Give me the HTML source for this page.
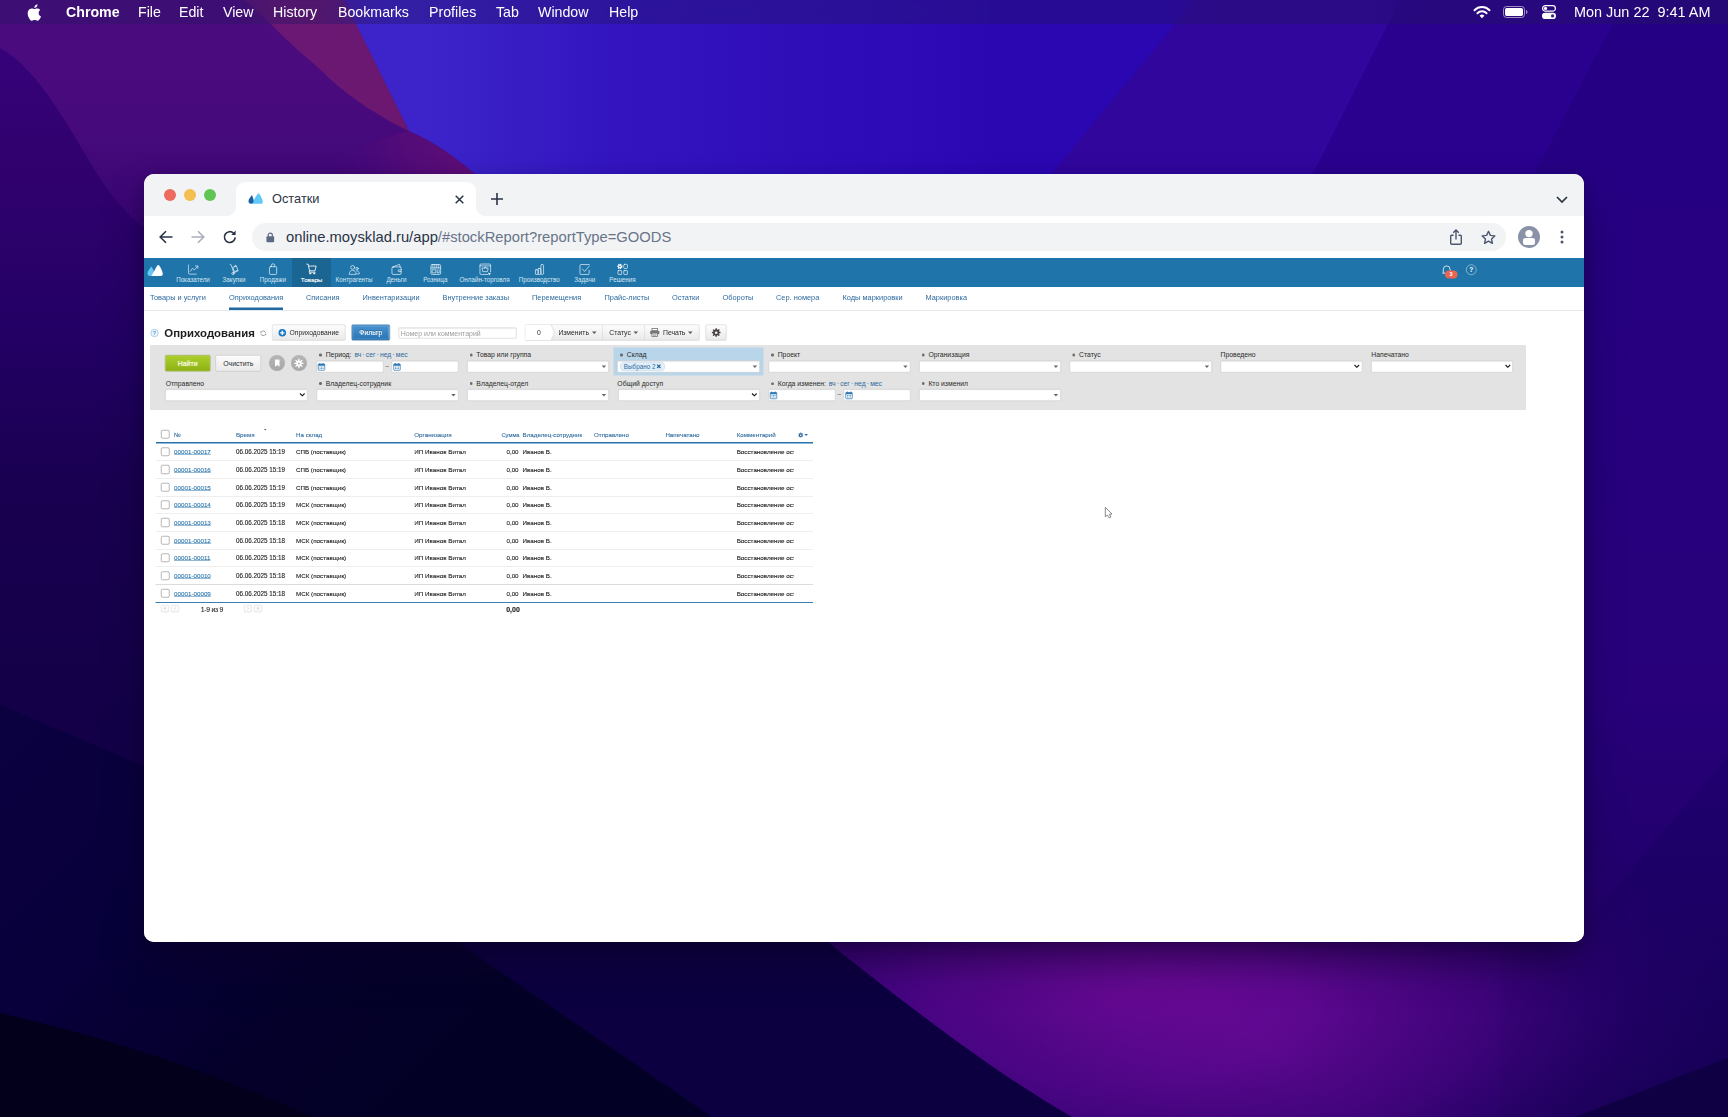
<!DOCTYPE html>
<html lang="ru">
<head>
<meta charset="utf-8">
<title>Остатки</title>
<style>
*{box-sizing:border-box}
html,body{margin:0;padding:0}
body{width:1728px;height:1117px;overflow:hidden;position:relative;background:#24007c;font-family:"Liberation Sans",sans-serif;-webkit-font-smoothing:antialiased}
#wall{position:absolute;left:0;top:0;width:1728px;height:1117px;display:block}
/* ---------- macOS menu bar ---------- */
#menubar{position:absolute;left:0;top:0;width:1728px;height:24px;background:rgba(36,22,96,.36);-webkit-backdrop-filter:blur(18px);backdrop-filter:blur(18px);color:#fff;font-size:14.2px;line-height:24px;white-space:nowrap}
#menubar span{position:absolute;top:0;height:24px}
#menubar .b{font-weight:700}
#menubar svg{position:absolute}
/* ---------- chrome window ---------- */
#win{position:absolute;left:144px;top:174px;width:1440px;height:768px;border-radius:10px;background:#fff;overflow:hidden;box-shadow:0 24px 42px -6px rgba(12,0,40,.6),0 3px 12px rgba(12,0,40,.25)}
#titlebar{position:absolute;left:0;top:0;width:1440px;height:42px;background:#f1f3f5}
.tl{position:absolute;top:15px;width:12px;height:12px;border-radius:50%}
#tab{position:absolute;left:92px;top:8px;width:240px;height:34px;background:#fff;border-radius:9px 9px 0 0}
#tab:before,#tab:after{content:"";position:absolute;bottom:0;width:9px;height:9px}
#tab:before{left:-9px;background:radial-gradient(circle at 0 0,rgba(255,255,255,0) 8.5px,#fff 9px)}
#tab:after{right:-9px;background:radial-gradient(circle at 100% 0,rgba(255,255,255,0) 8.5px,#fff 9px)}
#tabtitle{position:absolute;left:36px;top:0;height:34px;line-height:33px;font-size:12.8px;color:#2b3445}
#toolbar{position:absolute;left:0;top:42px;width:1440px;height:42px;background:#fff}
#omni{position:absolute;left:108px;top:7px;width:1254px;height:28px;border-radius:14px;background:#f1f3f5}
#url{position:absolute;left:34px;top:0;height:28px;line-height:29px;font-size:14.77px;color:#2b3445;white-space:nowrap}
#url i{font-style:normal;color:#6a7488}
#win svg{position:absolute;overflow:visible}
/* ---------- app ---------- */
#view{position:absolute;left:0;top:84px;width:1440px;height:684px;overflow:hidden;background:#fff}
#app{position:absolute;left:0;top:0;width:2880px;height:1368px;transform:scale(.5);transform-origin:0 0;font-size:13.6px;color:#222}
#app div,#app span,#app a,#app svg{position:absolute;white-space:nowrap}
</style>
</head>
<body>
<!--WALL-->
<svg id="wall" width="1728" height="1117" viewBox="0 0 1728 1117" preserveAspectRatio="none">
<defs>
<linearGradient id="gBase" x1="0" y1="0" x2="0" y2="1">
<stop offset="0" stop-color="#2c08b2"/><stop offset=".16" stop-color="#2b07a8"/><stop offset=".5" stop-color="#270090"/><stop offset=".85" stop-color="#210070"/><stop offset="1" stop-color="#1a005c"/>
</linearGradient>
<linearGradient id="gBlue" x1="420" y1="0" x2="1000" y2="0" gradientUnits="userSpaceOnUse">
<stop offset="0" stop-color="#3c24ca"/><stop offset=".35" stop-color="#3314be"/><stop offset="1" stop-color="#2b07b2"/>
</linearGradient>
<linearGradient id="gR" x1="0" y1="0" x2="0" y2="1117" gradientUnits="userSpaceOnUse">
<stop offset="0" stop-color="#240084"/><stop offset=".16" stop-color="#260082"/><stop offset=".62" stop-color="#27007a"/><stop offset=".82" stop-color="#21006a"/><stop offset="1" stop-color="#1a005a"/>
</linearGradient>
<linearGradient id="gR2" x1="0" y1="750" x2="0" y2="1117" gradientUnits="userSpaceOnUse">
<stop offset="0" stop-color="#200070"/><stop offset="1" stop-color="#160054"/>
</linearGradient>
<linearGradient id="gL2" x1="0" y1="0" x2="0" y2="1">
<stop offset="0" stop-color="#4c0c80"/><stop offset=".16" stop-color="#470a7c"/><stop offset=".4" stop-color="#2a0068"/><stop offset=".6" stop-color="#1b0054"/><stop offset="1" stop-color="#14004a"/>
</linearGradient>
<linearGradient id="gL1" x1="0" y1="0" x2="0" y2="1">
<stop offset="0" stop-color="#36027a"/><stop offset=".16" stop-color="#31016e"/><stop offset=".4" stop-color="#220064"/><stop offset=".6" stop-color="#190050"/><stop offset="1" stop-color="#120046"/>
</linearGradient>
<linearGradient id="gMag" x1="300" y1="20" x2="470" y2="175" gradientUnits="userSpaceOnUse">
<stop offset="0" stop-color="#6a1874"/><stop offset=".6" stop-color="#6c1870"/><stop offset="1" stop-color="#5a0e76"/>
</linearGradient>
<radialGradient id="gGlow" cx="1110" cy="1000" r="620" gradientUnits="userSpaceOnUse" gradientTransform="translate(1110 1000) scale(1 .45) translate(-1110 -1000)">
<stop offset="0" stop-color="#6c0a96"/><stop offset=".3" stop-color="#5e0890"/><stop offset=".6" stop-color="#42047c" stop-opacity=".9"/><stop offset="1" stop-color="#22006a" stop-opacity="0"/>
</radialGradient>
<linearGradient id="gNavy" x1="0" y1="700" x2="0" y2="1117" gradientUnits="userSpaceOnUse">
<stop offset="0" stop-color="#0b003e"/><stop offset="1" stop-color="#08003a"/>
</linearGradient>
<linearGradient id="gMag2" x1="470" y1="150" x2="330" y2="176" gradientUnits="userSpaceOnUse">
<stop offset="0" stop-color="#5e0e76"/><stop offset=".45" stop-color="#560c78" stop-opacity=".8"/><stop offset="1" stop-color="#470a7c" stop-opacity="0"/>
</linearGradient>
<linearGradient id="gN1" x1="0" y1="740" x2="380" y2="1117" gradientUnits="userSpaceOnUse">
<stop offset="0" stop-color="#0b0040"/><stop offset=".4" stop-color="#07003a"/><stop offset=".75" stop-color="#04002a"/><stop offset="1" stop-color="#030026"/>
</linearGradient>
<linearGradient id="gEdge" x1="900" y1="1000" x2="1005" y2="853" gradientUnits="userSpaceOnUse">
<stop offset="0" stop-color="#2a0070" stop-opacity=".42"/><stop offset="1" stop-color="#2a0070" stop-opacity="0"/>
</linearGradient>
</defs>
<rect width="1728" height="1117" fill="url(#gBase)"/>
<!-- blue field top -->
<path d="M330 0H1200L1040 200H330Z" fill="url(#gBlue)"/>
<!-- diagonal bands top-right -->
<path d="M1195 0H1400L1300 200H1030Z" fill="#30069c"/>
<path d="M1400 0H1625L1520 200H1300Z" fill="#2a008e"/>
<!-- right strip -->
<path d="M1625 0H1728V1117H1500V920H1560V200H1520Z" fill="url(#gR)"/>
<path d="M1728 756L1560 952V920H1500V1117H1728Z" fill="url(#gR2)" opacity="0"/><path d="M1728 756L1560 952L1540 920H1500V1117H1728Z" fill="url(#gR2)"/>
<!-- bottom glow -->
<rect x="500" y="700" width="1228" height="417" fill="url(#gGlow)"/>
<path d="M700 900H1100L1340 1117H900Z" fill="url(#gEdge)"/>
<path d="M1728 1058C1670 1080 1620 1100 1575 1117H1728Z" fill="#0e0042"/>
<!-- navy bottom-left -->
<path d="M0 704L170 777V920H800C900 1000 990 1070 1072 1117H0Z" fill="#0c0040"/>
<path d="M0 704L170 777V920H426C540 1000 630 1060 712 1117H0Z" fill="url(#gN1)"/>
<path d="M0 1013C120 1040 230 1080 312 1117H0Z" fill="#02001a"/>
<!-- left purple field -->
<path d="M0 0H344L409 131C440 145 460 160 500 196H170V777L0 704Z" fill="url(#gL2)"/>
<path d="M280 196C330 155 380 138 409 131C440 145 460 160 500 196Z" fill="url(#gMag2)"/>
<!-- magenta wedge -->
<path d="M245 0L271 24C290 44 305 56 324 73C345 95 385 120 409 131L344 0Z" fill="url(#gMag)"/>
<!-- darker left lobe -->
<path d="M0 48C40 70 70 130 101 180C120 210 144 230 170 245V777L0 704Z" fill="url(#gL1)"/>
</svg>
<!--/WALL-->
<!--MENUBAR-->
<div id="menubar">
<svg style="left:27px;top:3.5px" width="14" height="17" viewBox="0 0 14 17"><path fill="#fff" d="M11.6 9c0-2 1.6-2.9 1.7-3-0.9-1.400-2.400-1.600-2.900-1.600-1.200-.1-2.400.7-3 .7-.6 0-1.600-.7-2.600-.7C3.400 4.400 2.100 5.200 1.400 6.400c-1.500 2.500-.4 6.300 1 8.300.7 1 1.500 2.100 2.600 2.100 1 0 1.400-.7 2.700-.7 1.200 0 1.600.7 2.700.7 1.100 0 1.800-1 2.500-2 .8-1.200 1.100-2.300 1.100-2.300-.1-.1-2.400-1-2.400-3.500zM9.700 2.800C10.200 2.100 10.600 1.200 10.500.2 9.700.3 8.700.8 8.200 1.500 7.700 2.100 7.200 3.100 7.300 4c.9.100 1.800-.5 2.400-1.200z"/></svg>
<span class="b" style="left:66px">Chrome</span>
<span style="left:138px">File</span>
<span style="left:179px">Edit</span>
<span style="left:223px">View</span>
<span style="left:273px">History</span>
<span style="left:338px">Bookmarks</span>
<span style="left:429px">Profiles</span>
<span style="left:496px">Tab</span>
<span style="left:538px">Window</span>
<span style="left:609px">Help</span>
<!-- wifi -->
<svg style="left:1473px;top:5px" width="18" height="14" viewBox="0 0 18 14"><g fill="none" stroke="#fff" stroke-width="2" stroke-linecap="round"><path d="M1.500 5.200A10.600 10.600 0 0 1 16.500 5.200"/><path d="M4.400 8.200A6.500 6.500 0 0 1 13.600 8.200"/></g><path fill="#fff" d="M9 13.200L6.600 10.700a3.400 3.400 0 0 1 4.800 0z"/></svg>
<!-- battery -->
<svg style="left:1503px;top:6px" width="26" height="12" viewBox="0 0 26 12"><rect x=".5" y=".5" width="21" height="11" rx="3" fill="none" stroke="#fff" stroke-opacity=".55"/><rect x="2" y="2" width="18" height="8" rx="1.700" fill="#fff"/><path d="M23 4v4c.9-.3 1.500-1.100 1.500-2S23.900 4.300 23 4z" fill="#fff" fill-opacity=".55"/></svg>
<!-- control center -->
<svg style="left:1542px;top:5px" width="14" height="14" viewBox="0 0 14 14"><rect x=".6" y=".6" width="12.800" height="5.600" rx="2.800" fill="none" stroke="#fff" stroke-width="1.200"/><circle cx="3.500" cy="3.400" r="1.600" fill="#fff"/><rect x="0" y="7.800" width="14" height="6.200" rx="3.100" fill="#fff"/><circle cx="10.600" cy="10.900" r="1.700" fill="#3a2a7c"/></svg>
<span style="left:1574px;font-size:14.45px">Mon Jun 22&nbsp; 9:41 AM</span>
</div>
<!--/MENUBAR-->
<div id="win">
<!--CHROME-->
<div id="titlebar">
<div class="tl" style="left:20px;background:#ec6a5e"></div>
<div class="tl" style="left:40px;background:#f4bf4f"></div>
<div class="tl" style="left:60px;background:#61c554"></div>
<div id="tab">
<svg style="left:12.400px;top:11.200px" width="15" height="11.250" viewBox="0 0 160 120"><path fill="#62c8f8" d="M36 115L100 13c6-10 18-10 24 0 16 27 34 57 34 82 0 13-8 20-20 20z"/><path fill="#1b609f" d="M41 20C30 40 5 62 5 88c0 17 10 27 25 27 18 0 30-15 30-30 0-25-10-50-19-65z"/></svg>
<div id="tabtitle">Остатки</div>
<svg style="left:219px;top:13px" width="9" height="9" viewBox="0 0 9 9"><path d="M.700.700l7.600 7.600M8.300.700L.700 8.300" stroke="#2b3445" stroke-width="1.500" fill="none"/></svg>
</div>
<svg style="left:347px;top:19px" width="12" height="12" viewBox="0 0 12 12"><path d="M6 0v12M0 6h12" stroke="#2b3445" stroke-width="1.600" fill="none"/></svg>
<svg style="left:1412px;top:22px" width="12" height="7" viewBox="0 0 12 7"><path d="M1 1l5 5 5-5" stroke="#2b3445" stroke-width="1.700" fill="none"/></svg>
</div>
<div id="toolbar">
<!-- back -->
<svg style="left:15px;top:14px" width="14" height="14" viewBox="0 0 14 14"><path d="M13.500 7H1.500M7 1.200L1.200 7 7 12.800" stroke="#2b3445" stroke-width="1.600" fill="none"/></svg>
<!-- forward -->
<svg style="left:47px;top:14px" width="14" height="14" viewBox="0 0 14 14"><path d="M.500 7h12M7 1.200L12.800 7 7 12.800" stroke="#a9aec0" stroke-width="1.600" fill="none"/></svg>
<!-- reload -->
<svg style="left:79px;top:14px" width="14" height="14" viewBox="0 0 14 14"><path d="M12.200 7.400A5.400 5.400 0 1 1 10.600 3.200" stroke="#2b3445" stroke-width="1.600" fill="none"/><path d="M12.600.600v4.300H8.300z" fill="#2b3445"/></svg>
<div id="omni">
<svg style="left:13.800px;top:8.800px" width="8.600" height="10.300" viewBox="0 0 10 12"><rect x=".5" y="5" width="9" height="6.800" rx="1" fill="#5f6983"/><path d="M2.600 5.500V3.600a2.400 2.400 0 0 1 4.800 0v1.900" stroke="#5f6983" stroke-width="1.400" fill="none"/></svg>
<div id="url">online.moysklad.ru/app<i>/#stockReport?reportType=GOODS</i></div>
<!-- share -->
<svg style="left:1198px;top:6px" width="12" height="16" viewBox="0 0 12 16"><path d="M3.600 6.300H1.700a1 1 0 0 0-1 1v6.900a1 1 0 0 0 1 1h8.600a1 1 0 0 0 1-1V7.300a1 1 0 0 0-1-1H8.400" stroke="#4b5670" stroke-width="1.400" fill="none"/><path d="M6 10.500V1.200M3.200 3.700L6 .9l2.800 2.800" stroke="#4b5670" stroke-width="1.400" fill="none"/></svg>
<!-- star -->
<svg style="left:1229px;top:6.500px" width="15" height="15" viewBox="0 0 15 15"><path d="M7.500 1.300l1.900 4.100 4.400.5-3.300 3 .9 4.400-3.900-2.200-3.900 2.200.9-4.400-3.300-3 4.400-.5z" stroke="#4b5670" stroke-width="1.400" fill="none" stroke-linejoin="round"/></svg>
</div>
<!-- profile -->
<svg style="left:1374px;top:10px" width="22" height="22" viewBox="0 0 22 22"><circle cx="11" cy="11" r="11" fill="#8a92a8"/><circle cx="11" cy="7.600" r="3.700" fill="#fff"/><path d="M5.200 12.800h11.600v3.600a2.500 2.500 0 0 1-2.500 2.500H7.700a2.500 2.500 0 0 1-2.500-2.500z" fill="#fff"/><rect x="5.200" y="11.900" width="11.600" height="7" rx="2.600" fill="#fff"/></svg>
<!-- kebab -->
<svg style="left:1416px;top:14px" width="4" height="14" viewBox="0 0 4 14"><circle cx="2" cy="2" r="1.500" fill="#4b5670"/><circle cx="2" cy="7" r="1.500" fill="#4b5670"/><circle cx="2" cy="12" r="1.500" fill="#4b5670"/></svg>
</div>
<!--/CHROME-->
<div id="view"><div id="app">
<!--APP-->
<div id="hdr" style="left:0;top:0;width:2880px;height:57.5px;background:#1f75aa"></div>
<div style="left:296px;top:0;width:78px;height:57.5px;background:#1b6592"></div>
<svg style="left:6px;top:13px;width:32px;height:24px" viewBox="0 0 160 120"><path fill="#67c8f8" d="M43 20C32 40 5 62 5 88c0 17 10 27 27 27 22 0 38-15 38-32 0-24-16-48-27-63z"/><path fill="#fff" d="M44 115L101 13c6-10 17-10 23 0 16 27 34 57 34 82 0 13-8 20-20 20z"/></svg>
<svg style="left:87px;top:12.8px;width:23.2px;height:23.2px" viewBox="0 0 12 12"><g fill="none" stroke="#fff" stroke-opacity=".82" stroke-width=".78" stroke-linecap="round" stroke-linejoin="round"><path d="M1 .5v8a1.500 1.500 0 0 0 1.500 1.500H9"/><path d="M3 7l2.200-3.200 1.800 2L10.500 1.800M8.200 1.500h2.500V4"/></g></svg>
<div style="left:18px;width:160px;text-align:center;top:34.4px;height:18px;line-height:18px;color:#d4e6f3;font-size:12.54px">Показатели</div>
<svg style="left:169px;top:11px;width:23.2px;height:25px" viewBox="0 0 12 12" preserveAspectRatio="none"><g fill="none" stroke="#fff" stroke-opacity=".82" stroke-width=".78" stroke-linecap="round" stroke-linejoin="round"><path d="M1.500 .8l1.300.6L5.600 9"/><circle cx="4.600" cy="9.600" r="1.100"/><path d="M5.800 8.800l4.200-1.800"/><path d="M4.900 3.600l3.300-1.200 1.500 4-3.300 1.300z"/><path d="M6.300 3c0-1.600 1.500-1.800 1.700-.6"/></g></svg>
<div style="left:100px;width:160px;text-align:center;top:34.4px;height:18px;line-height:18px;color:#d4e6f3;font-size:12.54px">Закупки</div>
<svg style="left:246.8px;top:11px;width:23.2px;height:25px" viewBox="0 0 12 12" preserveAspectRatio="none"><g fill="none" stroke="#fff" stroke-opacity=".82" stroke-width=".78" stroke-linecap="round" stroke-linejoin="round"><rect x="2" y="3" width="7.500" height="7.500" rx="1"/><path d="M4 3V2a1.700 1.700 0 0 1 3.500 0v1"/></g></svg>
<div style="left:177.8px;width:160px;text-align:center;top:34.4px;height:18px;line-height:18px;color:#d4e6f3;font-size:12.54px">Продажи</div>
<svg style="left:324.2px;top:12.8px;width:23.2px;height:23.2px" viewBox="0 0 12 12"><g fill="none" stroke="#fff" stroke-width=".85" stroke-linecap="round" stroke-linejoin="round" transform="translate(0 -1.250) scale(1 1.060)"><path d="M.8 .8h1.400l1.500 6.500h5.600l1.200-4.600H2.800"/><path d="M3.700 7.300l-.5 1.400h6.300"/><circle cx="4.300" cy="10" r=".6"/><circle cx="8.400" cy="10" r=".6"/></g></svg>
<div style="left:255.2px;width:160px;text-align:center;top:34.4px;height:18px;line-height:18px;color:#fff;font-size:12.5px;-webkit-text-stroke:0.24px #fff">Товары</div>
<svg style="left:409px;top:12.8px;width:23.2px;height:23.2px" viewBox="0 0 12 12"><g fill="none" stroke="#fff" stroke-opacity=".82" stroke-width=".78" stroke-linecap="round" stroke-linejoin="round"><circle cx="4.300" cy="3" r="2"/><path d="M.8 9.800c0-2.400 1.500-3.800 3.500-3.800s3.500 1.400 3.500 3.800z"/><circle cx="8.800" cy="4.300" r="1.300"/><path d="M8.600 6.600c1.600 0 2.600 1.200 2.600 3.200H8.600"/></g></svg>
<div style="left:340px;width:160px;text-align:center;top:34.4px;height:18px;line-height:18px;color:#d4e6f3;font-size:12.54px">Контрагенты</div>
<svg style="left:494px;top:11px;width:23.2px;height:25px" viewBox="0 0 12 12" preserveAspectRatio="none"><g fill="none" stroke="#fff" stroke-opacity=".82" stroke-width=".78" stroke-linecap="round" stroke-linejoin="round"><rect x="1" y="3.300" width="9.500" height="7.200" rx="1.200"/><path d="M2 3.300L8.800 .8l.7 2.500"/><path d="M10.500 6H8.300a.9.900 0 0 0 0 1.800h2.200"/></g></svg>
<div style="left:425px;width:160px;text-align:center;top:34.4px;height:18px;line-height:18px;color:#d4e6f3;font-size:12.54px">Деньги</div>
<svg style="left:571.6px;top:11px;width:23.2px;height:25px" viewBox="0 0 12 12" preserveAspectRatio="none"><g fill="none" stroke="#fff" stroke-opacity=".82" stroke-width=".78" stroke-linecap="round" stroke-linejoin="round"><rect x="1" y="1" width="10" height="9.500" rx="1.200"/><path d="M1 4.300h10M3 1v3.300M5 1v3.300M7 1v3.300M9 1v3.300"/><rect x="2.600" y="6" width="3.400" height="3" /><path d="M7.500 6v3h2V6"/></g></svg>
<div style="left:502.6px;width:160px;text-align:center;top:34.4px;height:18px;line-height:18px;color:#d4e6f3;font-size:12.54px">Розница</div>
<svg style="left:670px;top:11px;width:23.2px;height:25px" viewBox="0 0 12 12" preserveAspectRatio="none"><g fill="none" stroke="#fff" stroke-opacity=".82" stroke-width=".78" stroke-linecap="round" stroke-linejoin="round"><path d="M9 10.500H2A1 1 0 0 1 1 9.500V1.500A1 1 0 0 1 2 .5h9a1 1 0 0 1 1 1V8"/><path d="M1 2.300h11"/><path d="M3.500 4.300h6l-.8 3.500H4.300z"/><path d="M5.300 4.300c0-1.200 2.400-1.200 2.400 0"/></g><path d="M9.300 8.600l3.200 1.200-1.300.6-.6 1.400z" fill="#fff"/></svg>
<div style="left:601px;width:160px;text-align:center;top:34.4px;height:18px;line-height:18px;color:#d4e6f3;font-size:12.54px">Онлайн-торговля</div>
<svg style="left:779.6px;top:11px;width:23.2px;height:25px" viewBox="0 0 12 12" preserveAspectRatio="none"><g fill="none" stroke="#fff" stroke-opacity=".82" stroke-width=".78" stroke-linecap="round" stroke-linejoin="round"><rect x="1.500" y="6" width="2.800" height="4.500" rx=".6"/><rect x="4.300" y="4.800" width="2.800" height="5.700" rx=".6"/><rect x="7.100" y="1" width="2.800" height="9.500" rx="1.200"/></g></svg>
<div style="left:710.6px;width:160px;text-align:center;top:34.4px;height:18px;line-height:18px;color:#d4e6f3;font-size:12.54px">Производство</div>
<svg style="left:870.4px;top:11px;width:23.2px;height:25px" viewBox="0 0 12 12" preserveAspectRatio="none"><g fill="none" stroke="#fff" stroke-opacity=".82" stroke-width=".78" stroke-linecap="round" stroke-linejoin="round"><path d="M10.500 6.500V9.500a1 1 0 0 1-1 1H2a1 1 0 0 1-1-1V2A1 1 0 0 1 2 1h8.500"/><path d="M3.500 5.300l2.300 2.300L10.800 2.300"/></g></svg>
<div style="left:801.4px;width:160px;text-align:center;top:34.4px;height:18px;line-height:18px;color:#d4e6f3;font-size:12.54px">Задачи</div>
<svg style="left:946px;top:11px;width:23.2px;height:25px" viewBox="0 0 12 12" preserveAspectRatio="none"><g fill="none" stroke="#fff" stroke-opacity=".82" stroke-width=".78" stroke-linecap="round" stroke-linejoin="round"><rect x="7" y=".8" width="3.800" height="4" rx=".8"/><rect x="1" y="6.800" width="3.800" height="3.700" rx=".5"/><rect x="7" y="6.800" width="3.800" height="3.700" rx=".5"/></g><circle cx="3" cy="2.800" r="1.900" fill="none" stroke="#fff" stroke-width="1.500" stroke-dasharray="1.100 .55"/><circle cx="3" cy="2.800" r="1.300" fill="none" stroke="#fff" stroke-width="1"/></svg>
<div style="left:877px;width:160px;text-align:center;top:34.4px;height:18px;line-height:18px;color:#d4e6f3;font-size:12.54px">Решения</div>
<svg style="left:2594px;top:12px;width:24px;height:24px" viewBox="0 0 12 12"><path d="M2.300 9V5.300a3.400 3.400 0 0 1 6.800 0V9" fill="none" stroke="#fff" stroke-opacity=".85" stroke-width=".9"/><path d="M1.300 9.200h8.600" stroke="#fff" stroke-opacity=".85" stroke-width=".9"/></svg>
<div style="left:2601.6px;top:25.2px;width:25.2px;height:15.6px;border-radius:7.8px;background:#e96451;color:#fff;font-size:11px;font-weight:700;line-height:15.6px;text-align:center">3</div>
<div style="left:2644px;top:13.2px;width:21.2px;height:21.2px;border-radius:50%;border:1.8px solid rgba(255,255,255,.85);color:#fff;font-size:13.2px;font-weight:700;line-height:17.8px;text-align:center">?</div>
<div style="left:0;top:104px;width:2880px;height:1.6px;background:#e4e7ea"></div>
<div style="left:12px;top:68px;height:20px;line-height:20px;font-size:14.8px;color:#2c6a9e">Товары и услуги</div>
<div style="left:170px;top:68px;height:20px;line-height:20px;font-size:14.8px;color:#2c6a9e">Оприходования</div>
<div style="left:324px;top:68px;height:20px;line-height:20px;font-size:14.8px;color:#2c6a9e">Списания</div>
<div style="left:437px;top:68px;height:20px;line-height:20px;font-size:14.8px;color:#2c6a9e">Инвентаризации</div>
<div style="left:597px;top:68px;height:20px;line-height:20px;font-size:14.8px;color:#2c6a9e">Внутренние заказы</div>
<div style="left:776px;top:68px;height:20px;line-height:20px;font-size:14.8px;color:#2c6a9e">Перемещения</div>
<div style="left:921px;top:68px;height:20px;line-height:20px;font-size:14.8px;color:#2c6a9e">Прайс-листы</div>
<div style="left:1056px;top:68px;height:20px;line-height:20px;font-size:14.8px;color:#2c6a9e">Остатки</div>
<div style="left:1157px;top:68px;height:20px;line-height:20px;font-size:14.8px;color:#2c6a9e">Обороты</div>
<div style="left:1264px;top:68px;height:20px;line-height:20px;font-size:14.8px;color:#2c6a9e">Сер. номера</div>
<div style="left:1397px;top:68px;height:20px;line-height:20px;font-size:14.8px;color:#2c6a9e">Коды маркировки</div>
<div style="left:1563px;top:68px;height:20px;line-height:20px;font-size:14.8px;color:#2c6a9e">Маркировка</div>
<div style="left:170px;top:99px;width:108px;height:4.6px;background:#1f6aa3"></div>
<div style="left:12.8px;top:142.2px;width:16px;height:16px;border-radius:50%;border:1.6px solid #6fb0dc;background:#eaf4fb;color:#4f97c8;font-size:10.8px;font-weight:700;line-height:13.2px;text-align:center">?</div>
<div style="left:40.6px;top:133px;height:32px;line-height:32px;font-size:22.8px;font-weight:700;color:#1e1e1e">Оприходования</div>
<svg style="left:232px;top:143.6px;width:13.2px;height:13.2px" viewBox="0 0 10 10"><path d="M8.500 4.200A3.600 3.600 0 0 0 1.800 3.300M1.500 5.800a3.600 3.600 0 0 0 6.700.9" fill="none" stroke="#7c7c7c" stroke-width="1.100"/><path d="M.6 1.800v2.400h2.400zM9.400 8.200V5.800H7z" fill="#7c7c7c"/></svg>
<div style="left:256.2px;top:132.8px;width:147.2px;height:32.4px;border:1.2px solid #c9c9c9;border-radius:3.2px;background:linear-gradient(#fdfdfd,#e9e9e9);box-shadow:0 1px 1.2px rgba(0,0,0,.08)"></div>
<svg style="left:269.2px;top:142px;width:15.2px;height:15.2px" viewBox="0 0 10 10"><circle cx="5" cy="5" r="5" fill="#1a7ac4"/><path d="M5 2.200v5.600M2.200 5h5.600" stroke="#fff" stroke-width="1.700"/></svg>
<div style="left:291px;top:139px;height:20px;line-height:20px;font-size:13.52px;color:#2a2a2a">Оприходование</div>
<div style="left:415px;top:132.8px;width:77px;height:32.4px;border:1.2px solid #1a5a90;border-radius:3.2px;background:linear-gradient(#4a94d2,#2873b3);box-shadow:inset 0 0 0 1.2px rgba(255,255,255,.2)"></div>
<div style="left:417.8px;top:135.6px;width:71.4px;height:26.8px;border:1.1px dotted rgba(255,255,255,.6);border-radius:2px"></div>
<div style="left:415px;top:139px;width:77px;text-align:center;height:20px;line-height:20px;font-size:13.64px;color:#fff;-webkit-text-stroke:0.2px #fff;text-shadow:0 -1px 0 rgba(0,0,0,.3)">Фильтр</div>
<div style="left:509.4px;top:139px;width:235.2px;height:22px;border:1.2px solid #c4c4c4;border-radius:2px;background:#fff;box-shadow:inset 0 1.2px 1.6px rgba(0,0,0,.1)"></div>
<div style="left:513.4px;top:140px;height:20px;line-height:20px;font-size:13.92px;color:#9c9c9c">Номер или комментарий</div>
<div style="left:762px;top:132.8px;width:349.4px;height:32.4px;border:1.2px solid #c9c9c9;border-radius:3.2px;background:linear-gradient(#fdfdfd,#e9e9e9);box-shadow:0 1px 1.2px rgba(0,0,0,.08)"></div>
<svg style="left:763.2px;top:134px;width:60px;height:30px" viewBox="0 0 30 15"><path d="M0 0H25.800L29 7.500 25.800 15H0z" fill="#fff"/><path d="M25.800 0L29 7.500 25.800 15" fill="none" stroke="#d0d0d0" stroke-width=".6"/></svg>
<div style="left:762px;top:139px;width:56px;text-align:center;height:20px;line-height:20px;font-size:13.6px;color:#2a2a2a">0</div>
<div style="left:828.8px;top:139px;height:20px;line-height:20px;font-size:13.56px;color:#2a2a2a">Изменить</div>
<svg style="left:896px;top:147.4px;width:9.2px;height:5.2px" viewBox="0 0 46 26"><path d="M0 0h46L23 26z" fill="#5a5a5a"/></svg>
<div style="left:916.6px;top:133.8px;width:1.2px;height:30.4px;background:#d2d2d2"></div>
<div style="left:930.6px;top:139px;height:20px;line-height:20px;font-size:13.64px;color:#2a2a2a">Статус</div>
<svg style="left:979.2px;top:147.4px;width:9.2px;height:5.2px" viewBox="0 0 46 26"><path d="M0 0h46L23 26z" fill="#5a5a5a"/></svg>
<div style="left:1001px;top:133.8px;width:1.2px;height:30.4px;background:#d2d2d2"></div>
<svg style="left:1011px;top:140px;width:21px;height:18.4px" viewBox="0 0 98 90"><rect x="22" y="4" width="54" height="22" fill="#fff" stroke="#757575" stroke-width="8"/><rect x="4" y="26" width="90" height="36" rx="8" fill="#757575"/><rect x="22" y="50" width="54" height="34" fill="#fff" stroke="#757575" stroke-width="8"/><path d="M32 62h34M32 73h34" stroke="#757575" stroke-width="5"/></svg>
<div style="left:1038px;top:139px;height:20px;line-height:20px;font-size:13.7px;color:#2a2a2a">Печать</div>
<svg style="left:1088px;top:147.4px;width:9.2px;height:5.2px" viewBox="0 0 46 26"><path d="M0 0h46L23 26z" fill="#5a5a5a"/></svg>
<div style="left:1122.6px;top:132.8px;width:42.6px;height:32.4px;border:1.2px solid #c9c9c9;border-radius:3.2px;background:linear-gradient(#fdfdfd,#e9e9e9);box-shadow:0 1px 1.2px rgba(0,0,0,.08)"></div>
<svg style="left:1134.6px;top:139.6px;width:18.8px;height:18.8px" viewBox="0 0 100 100"><path fill="#4a4343" d="M43 2h14l2 13 8 3 11-8 10 10-8 11 3 8 13 2v14l-13 2-3 8 8 11-10 10-11-8-8 3-2 13H43l-2-13-8-3-11 8-10-10 8-11-3-8-13-2V43l13-2 3-8-8-11 10-10 11 8 8-3z"/><circle cx="50" cy="50" r="14" fill="#f0f0f0"/></svg>
<div style="left:12px;top:174px;width:2752px;height:130.2px;background:#e3e3e3;border-radius:2px"></div>
<div style="left:42px;top:194px;width:90.6px;height:33.2px;border:1.2px solid #7f9f12;border-radius:3.2px;background:linear-gradient(#aed02f,#8db112);box-shadow:inset 0 0 0 1.2px rgba(255,255,255,.25)"></div>
<div style="left:42px;top:200.6px;width:90.6px;text-align:center;height:20px;line-height:20px;font-size:13.9px;color:#fcfee8;text-shadow:0 0 2.4px #eef7b8,0 -0.8px 0 rgba(0,0,0,.12)">Найти</div>
<div style="left:143.2px;top:194px;width:90.6px;height:33.2px;border:1.2px solid #c9c9c9;border-radius:3.2px;background:linear-gradient(#fdfdfd,#e9e9e9);box-shadow:0 1px 1.2px rgba(0,0,0,.08)"></div>
<div style="left:143.2px;top:200.6px;width:90.6px;text-align:center;height:20px;line-height:20px;font-size:13.8px;color:#2a2a2a">Очистить</div>
<div style="left:250px;top:194.2px;width:32px;height:32px;border-radius:50%;background:linear-gradient(#b6b6b6,#a8a8a8)"></div>
<svg style="left:261.6px;top:203px;width:9px;height:14.6px" viewBox="0 0 54 76" preserveAspectRatio="none"><path d="M4 0h46a4 4 0 0 1 4 4v72L27 58 0 76V4a4 4 0 0 1 4-4z" fill="#fff"/></svg>
<div style="left:294px;top:194.2px;width:32px;height:32px;border-radius:50%;background:linear-gradient(#b6b6b6,#a8a8a8)"></div>
<svg style="left:300.2px;top:200.6px;width:19.6px;height:19.6px" viewBox="0 0 100 100"><path d="M45.6 1.2L54.4 1.2L59.6 26.9L81.4 12.4L87.6 18.6L73.1 40.4L98.8 45.6L98.8 54.4L73.1 59.6L87.6 81.4L81.4 87.6L59.6 73.1L54.4 98.8L45.6 98.8L40.4 73.1L18.6 87.6L12.4 81.4L26.9 59.6L1.2 54.4L1.2 45.6L26.9 40.4L12.4 18.6L18.6 12.4L40.4 26.9Z" fill="#fff"/><circle cx="50" cy="50" r="10" fill="#b0b0b0"/></svg>
<div style="left:938.6px;top:178.6px;width:300px;height:56.8px;background:#b8d5e9"></div>
<div style="left:350.2px;top:191.4px;width:5.4px;height:5.4px;border-radius:50%;background:#6e6e6e"></div>
<div style="left:363.4px;top:184px;height:20px;line-height:20px;font-size:13.64px;color:#2a2a2a">Период:<span style="position:static;color:#2c6a9e;font-size:13.6px;margin-left:5.8px">вч<span style="position:static;display:inline-block;width:9px;text-align:center;color:#2a5f90">·</span>сег<span style="position:static;display:inline-block;width:9px;text-align:center;color:#2a5f90">·</span>нед<span style="position:static;display:inline-block;width:9px;text-align:center;color:#2a5f90">·</span>мес</span></div>
<div style="left:344.6px;top:205px;width:134px;height:23.8px;border:1.2px solid #c2c2c2;border-radius:2px;background:#fff;box-shadow:inset 0 1.2px 1.6px rgba(0,0,0,.12)"></div>
<svg style="left:348.4px;top:210.2px;width:14px;height:15px" viewBox="0 0 56 60"><rect x="2" y="8" width="52" height="50" rx="5" fill="#fff" stroke="#2f78b4" stroke-width="6"/><rect x="2" y="8" width="52" height="14" fill="#2f78b4"/><path d="M14 0v14M42 0v14" stroke="#2f78b4" stroke-width="7"/><path d="M12 32h8M24 32h8M36 32h8M12 44h8M24 44h8M36 44h8" stroke="#2f78b4" stroke-width="6"/></svg>
<div style="left:483px;top:215.6px;width:7.4px;height:1.3px;background:#555"></div>
<div style="left:495px;top:205px;width:134px;height:23.8px;border:1.2px solid #c2c2c2;border-radius:2px;background:#fff;box-shadow:inset 0 1.2px 1.6px rgba(0,0,0,.12)"></div>
<svg style="left:498.8px;top:210.2px;width:14px;height:15px" viewBox="0 0 56 60"><rect x="2" y="8" width="52" height="50" rx="5" fill="#fff" stroke="#2f78b4" stroke-width="6"/><rect x="2" y="8" width="52" height="14" fill="#2f78b4"/><path d="M14 0v14M42 0v14" stroke="#2f78b4" stroke-width="7"/><path d="M12 32h8M24 32h8M36 32h8M12 44h8M24 44h8M36 44h8" stroke="#2f78b4" stroke-width="6"/></svg>
<div style="left:651.54px;top:191.4px;width:5.4px;height:5.4px;border-radius:50%;background:#6e6e6e"></div>
<div style="left:664.74px;top:184px;height:20px;line-height:20px;font-size:13.64px;color:#2a2a2a">Товар или группа</div>
<div style="left:645.94px;top:205px;width:284.4px;height:23.8px;border:1.2px solid #c2c2c2;border-radius:2px;background:#fff;box-shadow:inset 0 1.2px 1.6px rgba(0,0,0,.12)"></div>
<svg style="left:915.14px;top:214.8px;width:9.6px;height:5px" viewBox="0 0 46 26"><path d="M0 0h46L23 26z" fill="#666"/></svg>
<div style="left:952.48px;top:191.4px;width:5.4px;height:5.4px;border-radius:50%;background:#6e6e6e"></div>
<div style="left:965.68px;top:184px;height:20px;line-height:20px;font-size:13.64px;color:#2a2a2a">Склад</div>
<div style="left:946.28px;top:205px;width:285.6px;height:23.8px;border:1.2px solid #c2c2c2;border-radius:2px;background:#fff;box-shadow:inset 0 1.2px 1.6px rgba(0,0,0,.12)"></div>
<svg style="left:1216.68px;top:214.8px;width:9.6px;height:5px" viewBox="0 0 46 26"><path d="M0 0h46L23 26z" fill="#666"/></svg>
<div style="left:951.88px;top:208.4px;width:90px;height:17.2px;border:1.1px solid #b3d2ea;border-radius:8.6px;background:#e2eff9"></div>
<div style="left:959.68px;top:208px;height:18px;line-height:18px;font-size:12.6px;color:#2c6a9e">Выбрано 2</div>
<svg style="left:1024.68px;top:212.4px;width:9.2px;height:9.2px" viewBox="0 0 46 46"><path d="M6 6l34 34M40 6L6 40" stroke="#1f5f96" stroke-width="11" fill="none"/></svg>
<div style="left:1254.22px;top:191.4px;width:5.4px;height:5.4px;border-radius:50%;background:#6e6e6e"></div>
<div style="left:1267.42px;top:184px;height:20px;line-height:20px;font-size:13.64px;color:#2a2a2a">Проект</div>
<div style="left:1248.62px;top:205px;width:284.4px;height:23.8px;border:1.2px solid #c2c2c2;border-radius:2px;background:#fff;box-shadow:inset 0 1.2px 1.6px rgba(0,0,0,.12)"></div>
<svg style="left:1517.82px;top:214.8px;width:9.6px;height:5px" viewBox="0 0 46 26"><path d="M0 0h46L23 26z" fill="#666"/></svg>
<div style="left:1555.56px;top:191.4px;width:5.4px;height:5.4px;border-radius:50%;background:#6e6e6e"></div>
<div style="left:1568.76px;top:184px;height:20px;line-height:20px;font-size:13.64px;color:#2a2a2a">Организация</div>
<div style="left:1549.96px;top:205px;width:284.4px;height:23.8px;border:1.2px solid #c2c2c2;border-radius:2px;background:#fff;box-shadow:inset 0 1.2px 1.6px rgba(0,0,0,.12)"></div>
<svg style="left:1819.16px;top:214.8px;width:9.6px;height:5px" viewBox="0 0 46 26"><path d="M0 0h46L23 26z" fill="#666"/></svg>
<div style="left:1856.9px;top:191.4px;width:5.4px;height:5.4px;border-radius:50%;background:#6e6e6e"></div>
<div style="left:1870.1px;top:184px;height:20px;line-height:20px;font-size:13.64px;color:#2a2a2a">Статус</div>
<div style="left:1851.3px;top:205px;width:284.4px;height:23.8px;border:1.2px solid #c2c2c2;border-radius:2px;background:#fff;box-shadow:inset 0 1.2px 1.6px rgba(0,0,0,.12)"></div>
<svg style="left:2120.5px;top:214.8px;width:9.6px;height:5px" viewBox="0 0 46 26"><path d="M0 0h46L23 26z" fill="#666"/></svg>
<div style="left:2153.24px;top:184px;height:20px;line-height:20px;font-size:13.64px;color:#2a2a2a">Проведено</div>
<div style="left:2152.64px;top:205px;width:284.4px;height:23.8px;border:1.2px solid #c2c2c2;border-radius:2px;background:#fff;box-shadow:inset 0 1.2px 1.6px rgba(0,0,0,.12)"></div>
<svg style="left:2420.44px;top:213.2px;width:11.2px;height:7.2px" viewBox="0 0 56 36"><path d="M5 5l23 23L51 5" fill="none" stroke="#111" stroke-width="11"/></svg>
<div style="left:2454.58px;top:184px;height:20px;line-height:20px;font-size:13.64px;color:#2a2a2a">Напечатано</div>
<div style="left:2453.98px;top:205px;width:284.4px;height:23.8px;border:1.2px solid #c2c2c2;border-radius:2px;background:#fff;box-shadow:inset 0 1.2px 1.6px rgba(0,0,0,.12)"></div>
<svg style="left:2721.78px;top:213.2px;width:11.2px;height:7.2px" viewBox="0 0 56 36"><path d="M5 5l23 23L51 5" fill="none" stroke="#111" stroke-width="11"/></svg>
<div style="left:43.4px;top:240.8px;height:20px;line-height:20px;font-size:13.64px;color:#2a2a2a">Отправлено</div>
<div style="left:42px;top:262.2px;width:285.4px;height:23.8px;border:1.2px solid #c2c2c2;border-radius:2px;background:#fff;box-shadow:inset 0 1.2px 1.6px rgba(0,0,0,.12)"></div>
<svg style="left:310.8px;top:270.4px;width:11.2px;height:7.2px" viewBox="0 0 56 36"><path d="M5 5l23 23L51 5" fill="none" stroke="#111" stroke-width="11"/></svg>
<div style="left:350.2px;top:248.2px;width:5.4px;height:5.4px;border-radius:50%;background:#6e6e6e"></div>
<div style="left:363.4px;top:240.8px;height:20px;line-height:20px;font-size:13.64px;color:#2a2a2a">Владелец-сотрудник</div>
<div style="left:344.6px;top:262.2px;width:284.4px;height:23.8px;border:1.2px solid #c2c2c2;border-radius:2px;background:#fff;box-shadow:inset 0 1.2px 1.6px rgba(0,0,0,.12)"></div>
<svg style="left:613.8px;top:272px;width:9.6px;height:5px" viewBox="0 0 46 26"><path d="M0 0h46L23 26z" fill="#666"/></svg>
<div style="left:651.54px;top:248.2px;width:5.4px;height:5.4px;border-radius:50%;background:#6e6e6e"></div>
<div style="left:664.74px;top:240.8px;height:20px;line-height:20px;font-size:13.64px;color:#2a2a2a">Владелец-отдел</div>
<div style="left:645.94px;top:262.2px;width:284.4px;height:23.8px;border:1.2px solid #c2c2c2;border-radius:2px;background:#fff;box-shadow:inset 0 1.2px 1.6px rgba(0,0,0,.12)"></div>
<svg style="left:915.14px;top:272px;width:9.6px;height:5px" viewBox="0 0 46 26"><path d="M0 0h46L23 26z" fill="#666"/></svg>
<div style="left:946.68px;top:240.8px;height:20px;line-height:20px;font-size:13.64px;color:#2a2a2a">Общий доступ</div>
<div style="left:947.68px;top:262.2px;width:284.4px;height:23.8px;border:1.2px solid #c2c2c2;border-radius:2px;background:#fff;box-shadow:inset 0 1.2px 1.6px rgba(0,0,0,.12)"></div>
<svg style="left:1215.48px;top:270.4px;width:11.2px;height:7.2px" viewBox="0 0 56 36"><path d="M5 5l23 23L51 5" fill="none" stroke="#111" stroke-width="11"/></svg>
<div style="left:1254.22px;top:248.8px;width:5.4px;height:5.4px;border-radius:50%;background:#6e6e6e"></div>
<div style="left:1267.42px;top:241.4px;height:20px;line-height:20px;font-size:13.64px;color:#2a2a2a">Когда изменен:<span style="position:static;color:#2c6a9e;font-size:13.6px;margin-left:5.8px">вч<span style="position:static;display:inline-block;width:9px;text-align:center;color:#2a5f90">·</span>сег<span style="position:static;display:inline-block;width:9px;text-align:center;color:#2a5f90">·</span>нед<span style="position:static;display:inline-block;width:9px;text-align:center;color:#2a5f90">·</span>мес</span></div>
<div style="left:1248.62px;top:262.2px;width:134px;height:23.8px;border:1.2px solid #c2c2c2;border-radius:2px;background:#fff;box-shadow:inset 0 1.2px 1.6px rgba(0,0,0,.12)"></div>
<svg style="left:1252.42px;top:267.4px;width:14px;height:15px" viewBox="0 0 56 60"><rect x="2" y="8" width="52" height="50" rx="5" fill="#fff" stroke="#2f78b4" stroke-width="6"/><rect x="2" y="8" width="52" height="14" fill="#2f78b4"/><path d="M14 0v14M42 0v14" stroke="#2f78b4" stroke-width="7"/><path d="M12 32h8M24 32h8M36 32h8M12 44h8M24 44h8M36 44h8" stroke="#2f78b4" stroke-width="6"/></svg>
<div style="left:1387.02px;top:272.8px;width:7.4px;height:1.3px;background:#555"></div>
<div style="left:1399.02px;top:262.2px;width:134px;height:23.8px;border:1.2px solid #c2c2c2;border-radius:2px;background:#fff;box-shadow:inset 0 1.2px 1.6px rgba(0,0,0,.12)"></div>
<svg style="left:1402.82px;top:267.4px;width:14px;height:15px" viewBox="0 0 56 60"><rect x="2" y="8" width="52" height="50" rx="5" fill="#fff" stroke="#2f78b4" stroke-width="6"/><rect x="2" y="8" width="52" height="14" fill="#2f78b4"/><path d="M14 0v14M42 0v14" stroke="#2f78b4" stroke-width="7"/><path d="M12 32h8M24 32h8M36 32h8M12 44h8M24 44h8M36 44h8" stroke="#2f78b4" stroke-width="6"/></svg>
<div style="left:1555.56px;top:248.2px;width:5.4px;height:5.4px;border-radius:50%;background:#6e6e6e"></div>
<div style="left:1568.76px;top:240.8px;height:20px;line-height:20px;font-size:13.64px;color:#2a2a2a">Кто изменил</div>
<div style="left:1549.96px;top:262.2px;width:284.4px;height:23.8px;border:1.2px solid #c2c2c2;border-radius:2px;background:#fff;box-shadow:inset 0 1.2px 1.6px rgba(0,0,0,.12)"></div>
<svg style="left:1819.16px;top:272px;width:9.6px;height:5px" viewBox="0 0 46 26"><path d="M0 0h46L23 26z" fill="#666"/></svg>
<div style="left:34.2px;top:343.6px;width:17.2px;height:17.2px;border:1.5px solid #6f6f6f;border-radius:3px;background:#fff"></div>
<div style="left:60px;top:344.6px;color:#2c6a9e;font-size:12.4px;height:18px;line-height:18px;-webkit-text-stroke:0.18px #2c6a9e">№</div>
<div style="left:183.8px;top:344.6px;color:#2c6a9e;font-size:12.4px;height:18px;line-height:18px;-webkit-text-stroke:0.18px #2c6a9e">Время</div>
<svg style="left:238.8px;top:341px;width:7px;height:4px" viewBox="0 0 46 26"><path d="M0 0h46L23 26z" fill="#6a6a6a"/></svg>
<div style="left:304px;top:344.6px;color:#2c6a9e;font-size:12.4px;height:18px;line-height:18px;-webkit-text-stroke:0.18px #2c6a9e">На склад</div>
<div style="left:540.6px;top:344.6px;color:#2c6a9e;font-size:12.4px;height:18px;line-height:18px;-webkit-text-stroke:0.18px #2c6a9e">Организация</div>
<div style="left:671.2px;top:344.6px;width:80px;text-align:right;color:#2c6a9e;font-size:12.4px;height:18px;line-height:18px;-webkit-text-stroke:0.18px #2c6a9e;font-size:11.6px">Сумма</div>
<div style="left:757.2px;top:344.6px;color:#2c6a9e;font-size:12.4px;height:18px;line-height:18px;-webkit-text-stroke:0.18px #2c6a9e">Владелец-сотрудник</div>
<div style="left:900px;top:344.6px;color:#2c6a9e;font-size:12.4px;height:18px;line-height:18px;-webkit-text-stroke:0.18px #2c6a9e">Отправлено</div>
<div style="left:1042.8px;top:344.6px;color:#2c6a9e;font-size:12.4px;height:18px;line-height:18px;-webkit-text-stroke:0.18px #2c6a9e">Напечатано</div>
<div style="left:1185.4px;top:344.6px;color:#2c6a9e;font-size:12.4px;height:18px;line-height:18px;-webkit-text-stroke:0.18px #2c6a9e">Комментарий</div>
<svg style="left:1308px;top:348.6px;width:10.8px;height:10.8px" viewBox="0 0 100 100"><path fill="#2c6a9e" d="M43 2h14l2 13 8 3 11-8 10 10-8 11 3 8 13 2v14l-13 2-3 8 8 11-10 10-11-8-8 3-2 13H43l-2-13-8-3-11 8-10-10 8-11-3-8-13-2V43l13-2 3-8-8-11 10-10 11 8 8-3z"/><circle cx="50" cy="50" r="14" fill="#fff"/></svg>
<svg style="left:1320.6px;top:352px;width:6.8px;height:4px" viewBox="0 0 46 26"><path d="M0 0h46L23 26z" fill="#2c6a9e"/></svg>
<div style="left:23.4px;top:367.5px;width:1314.6px;height:3.4px;background:#2673ab"></div>
<div style="left:34.2px;top:379px;width:17.2px;height:17.2px;border:1.5px solid #6f6f6f;border-radius:3px;background:#fff"></div>
<a style="left:60px;top:379.1px;color:#1c1c1c;font-size:12.5px;height:18px;line-height:18px;-webkit-text-stroke:0.22px #1c1c1c;color:#2673ab;-webkit-text-stroke:0.2px #2673ab;text-decoration:underline">00001-00017</a>
<div style="left:183.8px;top:379.1px;color:#1c1c1c;font-size:12.5px;height:18px;line-height:18px;-webkit-text-stroke:0.22px #1c1c1c;font-size:12.6px">06.06.2025 15:19</div>
<div style="left:304px;top:379.1px;color:#1c1c1c;font-size:12.5px;height:18px;line-height:18px;-webkit-text-stroke:0.22px #1c1c1c">СПБ (поставщик)</div>
<div style="left:540.6px;top:379.1px;width:103.2px;overflow:hidden;color:#1c1c1c;font-size:12.5px;height:18px;line-height:18px;-webkit-text-stroke:0.22px #1c1c1c">ИП Иванов Виталий</div>
<div style="left:671.2px;top:379.1px;width:78px;text-align:right;color:#1c1c1c;font-size:12.5px;height:18px;line-height:18px;-webkit-text-stroke:0.22px #1c1c1c">0,00</div>
<div style="left:757.2px;top:379.1px;color:#1c1c1c;font-size:12.5px;height:18px;line-height:18px;-webkit-text-stroke:0.22px #1c1c1c">Иванов В.</div>
<div style="left:1185.4px;top:379.1px;width:114.6px;overflow:hidden;color:#1c1c1c;font-size:12.5px;height:18px;line-height:18px;-webkit-text-stroke:0.22px #1c1c1c">Восстановление остатков</div>
<div style="left:23.4px;top:404.8px;width:1314.6px;height:1.2px;background:#dcdcdc"></div>
<div style="left:34.2px;top:414.36px;width:17.2px;height:17.2px;border:1.5px solid #6f6f6f;border-radius:3px;background:#fff"></div>
<a style="left:60px;top:414.46px;color:#1c1c1c;font-size:12.5px;height:18px;line-height:18px;-webkit-text-stroke:0.22px #1c1c1c;color:#2673ab;-webkit-text-stroke:0.2px #2673ab;text-decoration:underline">00001-00016</a>
<div style="left:183.8px;top:414.46px;color:#1c1c1c;font-size:12.5px;height:18px;line-height:18px;-webkit-text-stroke:0.22px #1c1c1c;font-size:12.6px">06.06.2025 15:19</div>
<div style="left:304px;top:414.46px;color:#1c1c1c;font-size:12.5px;height:18px;line-height:18px;-webkit-text-stroke:0.22px #1c1c1c">СПБ (поставщик)</div>
<div style="left:540.6px;top:414.46px;width:103.2px;overflow:hidden;color:#1c1c1c;font-size:12.5px;height:18px;line-height:18px;-webkit-text-stroke:0.22px #1c1c1c">ИП Иванов Виталий</div>
<div style="left:671.2px;top:414.46px;width:78px;text-align:right;color:#1c1c1c;font-size:12.5px;height:18px;line-height:18px;-webkit-text-stroke:0.22px #1c1c1c">0,00</div>
<div style="left:757.2px;top:414.46px;color:#1c1c1c;font-size:12.5px;height:18px;line-height:18px;-webkit-text-stroke:0.22px #1c1c1c">Иванов В.</div>
<div style="left:1185.4px;top:414.46px;width:114.6px;overflow:hidden;color:#1c1c1c;font-size:12.5px;height:18px;line-height:18px;-webkit-text-stroke:0.22px #1c1c1c">Восстановление остатков</div>
<div style="left:23.4px;top:440.16px;width:1314.6px;height:1.2px;background:#dcdcdc"></div>
<div style="left:34.2px;top:449.72px;width:17.2px;height:17.2px;border:1.5px solid #6f6f6f;border-radius:3px;background:#fff"></div>
<a style="left:60px;top:449.82px;color:#1c1c1c;font-size:12.5px;height:18px;line-height:18px;-webkit-text-stroke:0.22px #1c1c1c;color:#2673ab;-webkit-text-stroke:0.2px #2673ab;text-decoration:underline">00001-00015</a>
<div style="left:183.8px;top:449.82px;color:#1c1c1c;font-size:12.5px;height:18px;line-height:18px;-webkit-text-stroke:0.22px #1c1c1c;font-size:12.6px">06.06.2025 15:19</div>
<div style="left:304px;top:449.82px;color:#1c1c1c;font-size:12.5px;height:18px;line-height:18px;-webkit-text-stroke:0.22px #1c1c1c">СПБ (поставщик)</div>
<div style="left:540.6px;top:449.82px;width:103.2px;overflow:hidden;color:#1c1c1c;font-size:12.5px;height:18px;line-height:18px;-webkit-text-stroke:0.22px #1c1c1c">ИП Иванов Виталий</div>
<div style="left:671.2px;top:449.82px;width:78px;text-align:right;color:#1c1c1c;font-size:12.5px;height:18px;line-height:18px;-webkit-text-stroke:0.22px #1c1c1c">0,00</div>
<div style="left:757.2px;top:449.82px;color:#1c1c1c;font-size:12.5px;height:18px;line-height:18px;-webkit-text-stroke:0.22px #1c1c1c">Иванов В.</div>
<div style="left:1185.4px;top:449.82px;width:114.6px;overflow:hidden;color:#1c1c1c;font-size:12.5px;height:18px;line-height:18px;-webkit-text-stroke:0.22px #1c1c1c">Восстановление остатков</div>
<div style="left:23.4px;top:475.52px;width:1314.6px;height:1.2px;background:#dcdcdc"></div>
<div style="left:34.2px;top:485.08px;width:17.2px;height:17.2px;border:1.5px solid #6f6f6f;border-radius:3px;background:#fff"></div>
<a style="left:60px;top:485.18px;color:#1c1c1c;font-size:12.5px;height:18px;line-height:18px;-webkit-text-stroke:0.22px #1c1c1c;color:#2673ab;-webkit-text-stroke:0.2px #2673ab;text-decoration:underline">00001-00014</a>
<div style="left:183.8px;top:485.18px;color:#1c1c1c;font-size:12.5px;height:18px;line-height:18px;-webkit-text-stroke:0.22px #1c1c1c;font-size:12.6px">06.06.2025 15:19</div>
<div style="left:304px;top:485.18px;color:#1c1c1c;font-size:12.5px;height:18px;line-height:18px;-webkit-text-stroke:0.22px #1c1c1c">МСК (поставщик)</div>
<div style="left:540.6px;top:485.18px;width:103.2px;overflow:hidden;color:#1c1c1c;font-size:12.5px;height:18px;line-height:18px;-webkit-text-stroke:0.22px #1c1c1c">ИП Иванов Виталий</div>
<div style="left:671.2px;top:485.18px;width:78px;text-align:right;color:#1c1c1c;font-size:12.5px;height:18px;line-height:18px;-webkit-text-stroke:0.22px #1c1c1c">0,00</div>
<div style="left:757.2px;top:485.18px;color:#1c1c1c;font-size:12.5px;height:18px;line-height:18px;-webkit-text-stroke:0.22px #1c1c1c">Иванов В.</div>
<div style="left:1185.4px;top:485.18px;width:114.6px;overflow:hidden;color:#1c1c1c;font-size:12.5px;height:18px;line-height:18px;-webkit-text-stroke:0.22px #1c1c1c">Восстановление остатков</div>
<div style="left:23.4px;top:510.88px;width:1314.6px;height:1.2px;background:#dcdcdc"></div>
<div style="left:34.2px;top:520.44px;width:17.2px;height:17.2px;border:1.5px solid #6f6f6f;border-radius:3px;background:#fff"></div>
<a style="left:60px;top:520.54px;color:#1c1c1c;font-size:12.5px;height:18px;line-height:18px;-webkit-text-stroke:0.22px #1c1c1c;color:#2673ab;-webkit-text-stroke:0.2px #2673ab;text-decoration:underline">00001-00013</a>
<div style="left:183.8px;top:520.54px;color:#1c1c1c;font-size:12.5px;height:18px;line-height:18px;-webkit-text-stroke:0.22px #1c1c1c;font-size:12.6px">06.06.2025 15:18</div>
<div style="left:304px;top:520.54px;color:#1c1c1c;font-size:12.5px;height:18px;line-height:18px;-webkit-text-stroke:0.22px #1c1c1c">МСК (поставщик)</div>
<div style="left:540.6px;top:520.54px;width:103.2px;overflow:hidden;color:#1c1c1c;font-size:12.5px;height:18px;line-height:18px;-webkit-text-stroke:0.22px #1c1c1c">ИП Иванов Виталий</div>
<div style="left:671.2px;top:520.54px;width:78px;text-align:right;color:#1c1c1c;font-size:12.5px;height:18px;line-height:18px;-webkit-text-stroke:0.22px #1c1c1c">0,00</div>
<div style="left:757.2px;top:520.54px;color:#1c1c1c;font-size:12.5px;height:18px;line-height:18px;-webkit-text-stroke:0.22px #1c1c1c">Иванов В.</div>
<div style="left:1185.4px;top:520.54px;width:114.6px;overflow:hidden;color:#1c1c1c;font-size:12.5px;height:18px;line-height:18px;-webkit-text-stroke:0.22px #1c1c1c">Восстановление остатков</div>
<div style="left:23.4px;top:546.24px;width:1314.6px;height:1.2px;background:#dcdcdc"></div>
<div style="left:34.2px;top:555.8px;width:17.2px;height:17.2px;border:1.5px solid #6f6f6f;border-radius:3px;background:#fff"></div>
<a style="left:60px;top:555.9px;color:#1c1c1c;font-size:12.5px;height:18px;line-height:18px;-webkit-text-stroke:0.22px #1c1c1c;color:#2673ab;-webkit-text-stroke:0.2px #2673ab;text-decoration:underline">00001-00012</a>
<div style="left:183.8px;top:555.9px;color:#1c1c1c;font-size:12.5px;height:18px;line-height:18px;-webkit-text-stroke:0.22px #1c1c1c;font-size:12.6px">06.06.2025 15:18</div>
<div style="left:304px;top:555.9px;color:#1c1c1c;font-size:12.5px;height:18px;line-height:18px;-webkit-text-stroke:0.22px #1c1c1c">МСК (поставщик)</div>
<div style="left:540.6px;top:555.9px;width:103.2px;overflow:hidden;color:#1c1c1c;font-size:12.5px;height:18px;line-height:18px;-webkit-text-stroke:0.22px #1c1c1c">ИП Иванов Виталий</div>
<div style="left:671.2px;top:555.9px;width:78px;text-align:right;color:#1c1c1c;font-size:12.5px;height:18px;line-height:18px;-webkit-text-stroke:0.22px #1c1c1c">0,00</div>
<div style="left:757.2px;top:555.9px;color:#1c1c1c;font-size:12.5px;height:18px;line-height:18px;-webkit-text-stroke:0.22px #1c1c1c">Иванов В.</div>
<div style="left:1185.4px;top:555.9px;width:114.6px;overflow:hidden;color:#1c1c1c;font-size:12.5px;height:18px;line-height:18px;-webkit-text-stroke:0.22px #1c1c1c">Восстановление остатков</div>
<div style="left:23.4px;top:581.6px;width:1314.6px;height:1.2px;background:#dcdcdc"></div>
<div style="left:34.2px;top:591.16px;width:17.2px;height:17.2px;border:1.5px solid #6f6f6f;border-radius:3px;background:#fff"></div>
<a style="left:60px;top:591.26px;color:#1c1c1c;font-size:12.5px;height:18px;line-height:18px;-webkit-text-stroke:0.22px #1c1c1c;color:#2673ab;-webkit-text-stroke:0.2px #2673ab;text-decoration:underline">00001-00011</a>
<div style="left:183.8px;top:591.26px;color:#1c1c1c;font-size:12.5px;height:18px;line-height:18px;-webkit-text-stroke:0.22px #1c1c1c;font-size:12.6px">06.06.2025 15:18</div>
<div style="left:304px;top:591.26px;color:#1c1c1c;font-size:12.5px;height:18px;line-height:18px;-webkit-text-stroke:0.22px #1c1c1c">МСК (поставщик)</div>
<div style="left:540.6px;top:591.26px;width:103.2px;overflow:hidden;color:#1c1c1c;font-size:12.5px;height:18px;line-height:18px;-webkit-text-stroke:0.22px #1c1c1c">ИП Иванов Виталий</div>
<div style="left:671.2px;top:591.26px;width:78px;text-align:right;color:#1c1c1c;font-size:12.5px;height:18px;line-height:18px;-webkit-text-stroke:0.22px #1c1c1c">0,00</div>
<div style="left:757.2px;top:591.26px;color:#1c1c1c;font-size:12.5px;height:18px;line-height:18px;-webkit-text-stroke:0.22px #1c1c1c">Иванов В.</div>
<div style="left:1185.4px;top:591.26px;width:114.6px;overflow:hidden;color:#1c1c1c;font-size:12.5px;height:18px;line-height:18px;-webkit-text-stroke:0.22px #1c1c1c">Восстановление остатков</div>
<div style="left:23.4px;top:616.96px;width:1314.6px;height:1.2px;background:#dcdcdc"></div>
<div style="left:34.2px;top:626.52px;width:17.2px;height:17.2px;border:1.5px solid #6f6f6f;border-radius:3px;background:#fff"></div>
<a style="left:60px;top:626.62px;color:#1c1c1c;font-size:12.5px;height:18px;line-height:18px;-webkit-text-stroke:0.22px #1c1c1c;color:#2673ab;-webkit-text-stroke:0.2px #2673ab;text-decoration:underline">00001-00010</a>
<div style="left:183.8px;top:626.62px;color:#1c1c1c;font-size:12.5px;height:18px;line-height:18px;-webkit-text-stroke:0.22px #1c1c1c;font-size:12.6px">06.06.2025 15:18</div>
<div style="left:304px;top:626.62px;color:#1c1c1c;font-size:12.5px;height:18px;line-height:18px;-webkit-text-stroke:0.22px #1c1c1c">МСК (поставщик)</div>
<div style="left:540.6px;top:626.62px;width:103.2px;overflow:hidden;color:#1c1c1c;font-size:12.5px;height:18px;line-height:18px;-webkit-text-stroke:0.22px #1c1c1c">ИП Иванов Виталий</div>
<div style="left:671.2px;top:626.62px;width:78px;text-align:right;color:#1c1c1c;font-size:12.5px;height:18px;line-height:18px;-webkit-text-stroke:0.22px #1c1c1c">0,00</div>
<div style="left:757.2px;top:626.62px;color:#1c1c1c;font-size:12.5px;height:18px;line-height:18px;-webkit-text-stroke:0.22px #1c1c1c">Иванов В.</div>
<div style="left:1185.4px;top:626.62px;width:114.6px;overflow:hidden;color:#1c1c1c;font-size:12.5px;height:18px;line-height:18px;-webkit-text-stroke:0.22px #1c1c1c">Восстановление остатков</div>
<div style="left:23.4px;top:652.32px;width:1314.6px;height:1.2px;background:#dcdcdc"></div>
<div style="left:34.2px;top:661.88px;width:17.2px;height:17.2px;border:1.5px solid #6f6f6f;border-radius:3px;background:#fff"></div>
<a style="left:60px;top:661.98px;color:#1c1c1c;font-size:12.5px;height:18px;line-height:18px;-webkit-text-stroke:0.22px #1c1c1c;color:#2673ab;-webkit-text-stroke:0.2px #2673ab;text-decoration:underline">00001-00009</a>
<div style="left:183.8px;top:661.98px;color:#1c1c1c;font-size:12.5px;height:18px;line-height:18px;-webkit-text-stroke:0.22px #1c1c1c;font-size:12.6px">06.06.2025 15:18</div>
<div style="left:304px;top:661.98px;color:#1c1c1c;font-size:12.5px;height:18px;line-height:18px;-webkit-text-stroke:0.22px #1c1c1c">МСК (поставщик)</div>
<div style="left:540.6px;top:661.98px;width:103.2px;overflow:hidden;color:#1c1c1c;font-size:12.5px;height:18px;line-height:18px;-webkit-text-stroke:0.22px #1c1c1c">ИП Иванов Виталий</div>
<div style="left:671.2px;top:661.98px;width:78px;text-align:right;color:#1c1c1c;font-size:12.5px;height:18px;line-height:18px;-webkit-text-stroke:0.22px #1c1c1c">0,00</div>
<div style="left:757.2px;top:661.98px;color:#1c1c1c;font-size:12.5px;height:18px;line-height:18px;-webkit-text-stroke:0.22px #1c1c1c">Иванов В.</div>
<div style="left:1185.4px;top:661.98px;width:114.6px;overflow:hidden;color:#1c1c1c;font-size:12.5px;height:18px;line-height:18px;-webkit-text-stroke:0.22px #1c1c1c">Восстановление остатков</div>
<div style="left:23.4px;top:687.8px;width:1314.6px;height:1.8px;background:#3c80b2"></div>
<div style="left:34.2px;top:693.8px;width:15.4px;height:14.6px;border:1.1px solid #d6d6d6;border-radius:2px;background:#fbfbfb;box-shadow:0 0.8px 0.8px rgba(0,0,0,.05)"></div>
<svg style="left:37.9px;top:697.3px;width:8px;height:7.6px" viewBox="0 0 40 38"><path d="M20 8L8 19 20 30M32 8L20 19 32 30" fill="none" stroke="#b4b4b4" stroke-width="4.600"/></svg>
<div style="left:54.2px;top:693.8px;width:15.4px;height:14.6px;border:1.1px solid #d6d6d6;border-radius:2px;background:#fbfbfb;box-shadow:0 0.8px 0.8px rgba(0,0,0,.05)"></div>
<svg style="left:57.9px;top:697.3px;width:8px;height:7.6px" viewBox="0 0 40 38"><path d="M26 8L14 19 26 30" fill="none" stroke="#b4b4b4" stroke-width="4.600"/></svg>
<div style="left:200.4px;top:693.8px;width:15.4px;height:14.6px;border:1.1px solid #d6d6d6;border-radius:2px;background:#fbfbfb;box-shadow:0 0.8px 0.8px rgba(0,0,0,.05)"></div>
<svg style="left:204.1px;top:697.3px;width:8px;height:7.6px" viewBox="0 0 40 38"><path d="M14 8L26 19 14 30" fill="none" stroke="#b4b4b4" stroke-width="4.600"/></svg>
<div style="left:220.4px;top:693.8px;width:15.4px;height:14.6px;border:1.1px solid #d6d6d6;border-radius:2px;background:#fbfbfb;box-shadow:0 0.8px 0.8px rgba(0,0,0,.05)"></div>
<svg style="left:224.1px;top:697.3px;width:8px;height:7.6px" viewBox="0 0 40 38"><path d="M8 8L20 19 8 30M20 8L32 19 20 30" fill="none" stroke="#b4b4b4" stroke-width="4.600"/></svg>
<div style="left:113.4px;top:694.9px;color:#2b2b2b;-webkit-text-stroke:0.24px #2b2b2b;font-size:13.7px;letter-spacing:-0.52px;height:18px;line-height:18px">1-9 из 9</div>
<div style="left:671.2px;top:694px;width:80.4px;text-align:right;color:#1c1c1c;font-size:12.5px;height:18px;line-height:18px;-webkit-text-stroke:0.22px #1c1c1c;font-weight:700;font-size:14px">0,00</div>
<!--/APP-->
</div></div>
</div>
<!--CURSOR-->
<svg style="position:absolute;left:1100px;top:502px" width="20" height="20" viewBox="1100 502 20 20"><path d="M1105.300 507.400V516.700L1107.500 515.100 1109.300 518 1110.900 517.100 1109.400 514.300 1112 514Z" fill="#fff" stroke="#6a6a6a" stroke-width=".8" stroke-linejoin="round"/></svg>
</body>
</html>
